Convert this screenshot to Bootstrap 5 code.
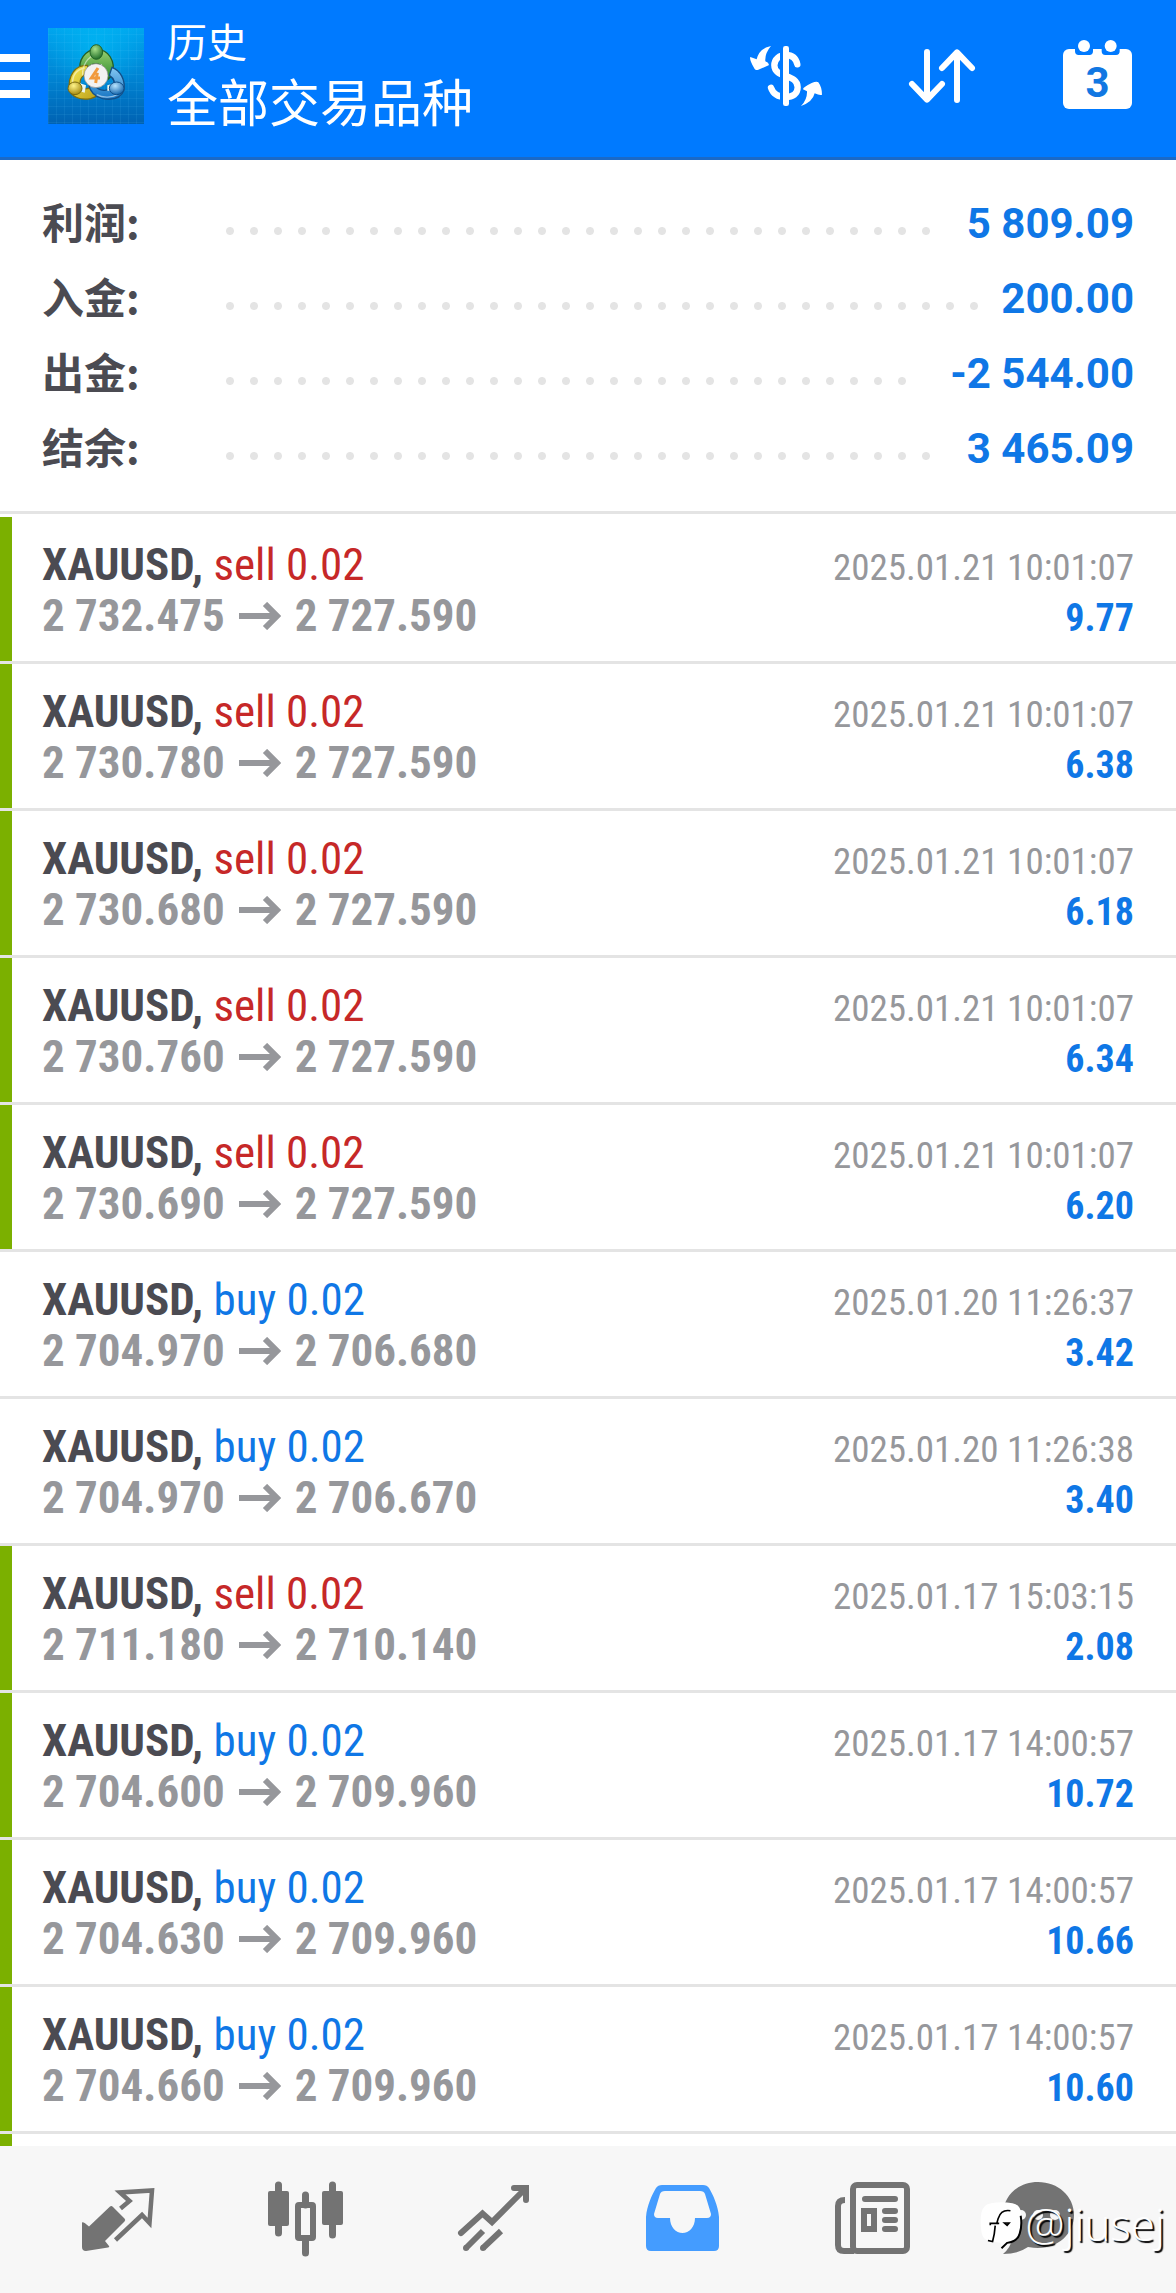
<!DOCTYPE html>
<html lang="zh-CN">
<head>
<meta charset="utf-8">
<meta name="viewport" content="width=device-width, initial-scale=1">
<title>历史 - 全部交易品种</title>
<link href="https://cdn.jsdelivr.net/npm/bootstrap@5.3.0/dist/css/bootstrap.min.css" rel="stylesheet">
<style>
:root{--edge:42px;--link:#0f77e6;--ink:#4b4b52;--soft:#96979b;--rule:#e4e4e4;--win:#7bb000}
body{font-family:Roboto,"Noto Sans CJK SC",sans-serif;color:var(--ink);background:#fff}
svg{display:block;flex:none}
.topbar{background:#007aff;border-bottom:3px solid #1a69c7;min-height:160px;padding-bottom:5px}
.burger{width:30px;height:44px}
.burger span{display:block;height:8px;background:#fff}
.app-logo{margin-left:18px}
.heading{margin:0 0 12px 23px;font-family:"Noto Sans CJK SC",sans-serif;line-height:60px}
.heading h1{font-size:40px;line-height:60px;font-weight:400}
.heading p{font-size:51px;line-height:60px}
.tool{width:156px;height:100px}
.totals{padding:26px var(--edge) 25px;border-bottom:3px solid var(--rule);margin-bottom:3px}
.total-line{height:75px;font-size:42px;font-weight:700;line-height:50px}
.total-line dt{width:176px;padding-bottom:6px;flex:none;font-family:"Noto Sans CJK SC",sans-serif;font-weight:700}
.leader{display:grid;grid-template-columns:repeat(auto-fill,24px);margin-right:14px}
.leader::before{content:"";grid-column:1/-1;height:24px;margin-top:15px;background:radial-gradient(circle,#e4e4e4 3.5px,transparent 4.5px) 0 0/24px 24px}
.total-line dd{color:var(--link)}
.deal{min-height:147px;padding:22px var(--edge) 0;border-bottom:3px solid var(--rule);position:relative;font-family:"Roboto Condensed","Liberation Sans Narrow",Roboto,sans-serif;line-height:51px;font-size:45px;flex:none}
.deal-win::before{content:"";position:absolute;left:0;top:0;bottom:0;width:12px;background:var(--win)}
.price{color:var(--soft);font-weight:700}
.price svg{width:42px;margin:0 14px 0 14px}
.stamp{font-size:37px;line-height:40px;color:var(--soft)}
.gain{font-size:38px;line-height:40px;font-weight:700;color:var(--link)}
.side-sell{color:#c62828}.side-buy{color:var(--link)}
.tabs{background:#f7f7f7;height:147px;padding:0 24px;color:#737373;position:relative}
.tabs a{color:inherit}
.tabs a.active{color:#449cff}
.stamp-mark{position:absolute;right:11px;bottom:37px;font-family:"Open Sans","Noto Sans",sans-serif;font-weight:300;font-size:44px;line-height:56px;color:#fff;text-shadow:2px 2px 1px #000;gap:3px;pointer-events:none}
.stamp-mark span{padding-bottom:4px}
</style>
<script src="https://cdn.jsdelivr.net/npm/bootstrap@5.3.0/dist/js/bootstrap.bundle.min.js"></script>
</head>
<body class="d-flex flex-column vh-100 overflow-hidden">

<header class="topbar d-flex align-items-center flex-shrink-0">
  <button class="burger btn border-0 rounded-0 p-0 d-flex flex-column justify-content-between" aria-label="菜单"><span class="w-100"></span><span class="w-100"></span><span class="w-100"></span></button>
  <svg class="app-logo" width="96" height="96" viewBox="144 54 288 288" role="img" aria-label="MetaTrader 4">
    <defs>
      <linearGradient id="sky" x1="0" y1="0" x2="0" y2="1"><stop offset="0" stop-color="#00a6ee"/><stop offset=".5" stop-color="#0085d4"/><stop offset="1" stop-color="#0062b2"/></linearGradient>
      <radialGradient id="glow" cx=".5" cy=".2" r=".5"><stop offset="0" stop-color="#00c0f8" stop-opacity=".6"/><stop offset="1" stop-color="#00c0f8" stop-opacity="0"/></radialGradient>
      <pattern id="mesh" width="24" height="24" patternUnits="userSpaceOnUse"><path d="M0 1H24M1 0V24" stroke="#6bd0ff" stroke-opacity=".16" stroke-width="2"/></pattern>
      <linearGradient id="gr" x1="0" y1="0" x2="0" y2="1"><stop offset="0" stop-color="#9bd070"/><stop offset="1" stop-color="#2a8a2d"/></linearGradient>
      <linearGradient id="ye" x1="0" y1="0" x2="1" y2="1"><stop offset="0" stop-color="#f7ea55"/><stop offset="1" stop-color="#b99c16"/></linearGradient>
      <linearGradient id="bl" x1="0" y1="0" x2="0" y2="1"><stop offset="0" stop-color="#85c8f2"/><stop offset="1" stop-color="#1473c2"/></linearGradient>
      <radialGradient id="gh" cx=".4" cy=".3" r=".7"><stop offset="0" stop-color="#a8e08a"/><stop offset="1" stop-color="#22702a"/></radialGradient>
      <radialGradient id="yh" cx=".4" cy=".3" r=".7"><stop offset="0" stop-color="#fff48a"/><stop offset="1" stop-color="#a58a10"/></radialGradient>
      <radialGradient id="bh" cx=".4" cy=".3" r=".7"><stop offset="0" stop-color="#b8e4ff"/><stop offset="1" stop-color="#1466ad"/></radialGradient>
    </defs>
    <path fill="url(#sky)" d="M144 54h288v288H144z"/><path fill="url(#glow)" d="M144 54h288v288H144z"/><path fill="url(#mesh)" d="M144 54h288v288H144z"/>
    <path d="M242 186C232 152 256 118 290 118C325 118 347 152 338 194L324 208C318 178 306 162 288 162C270 162 262 172 257 190Z" fill="url(#gr)" stroke="#245f25" stroke-width="4"/>
    <path d="M262 166C226 164 204 196 208 238C214 260 240 272 272 266C286 262 296 256 302 244L276 230C262 240 244 240 240 222C238 204 250 194 266 186Z" fill="url(#ye)" stroke="#7d6d0e" stroke-width="4"/>
    <path d="M336 172C362 182 376 210 372 240C362 268 332 270 308 266C284 260 270 244 266 224L284 226C298 244 322 246 338 232C348 216 340 204 328 196Z" fill="url(#bl)" stroke="#124f88" stroke-width="4"/>
    <path d="M274 162l16 10 16-10v16h-32zM240 220l18 6-4 22-14-4zM322 226l14-4 2 20-16 0z" fill="#eef6ee"/>
    <path d="M248 196C246 168 262 140 288 134M218 222C216 196 230 178 254 174M290 254C310 266 338 262 352 254" fill="none" stroke="#fff" stroke-opacity=".5" stroke-width="4"/>
    <ellipse cx="289" cy="126" rx="19" ry="22" fill="url(#gh)" stroke="#246327" stroke-width="3"/>
    <ellipse cx="225" cy="235" rx="21" ry="19" fill="url(#yh)" stroke="#7b6a10" stroke-width="3"/>
    <ellipse cx="350" cy="235" rx="22" ry="19" fill="url(#bh)" stroke="#104e88" stroke-width="3"/>
    <circle cx="288" cy="197" r="36" fill="#f3f2f2" stroke="#8a8a8a" stroke-width="2"/>
    <path d="M294 174L274 204H300M292 188L287 219" fill="none" stroke="#f19a3e" stroke-width="9"/>
  </svg>
  <div class="heading text-white">
    <h1 class="m-0">历史</h1>
    <p class="m-0">全部交易品种</p>
  </div>
  <div class="d-flex ms-auto">
    <button class="tool btn border-0 p-0 d-flex align-items-center justify-content-center" aria-label="交易品种">
      <svg width="84" height="72" viewBox="132 120 252 216"><g fill="none" stroke="#fff" stroke-width="19" stroke-linecap="round"><path d="M292 193C288 174 276 165 258 165C238 165 223 177 223 196C223 236 293 220 293 262C293 282 278 291 258 291C236 291 220 284 213 263"/></g><path d="M240 140h10v180h-10z" fill="#007aff"/><rect x="249" y="138" width="18" height="180" rx="7" fill="#fff"/><path fill="#fff" d="M213 138Q178 144 170 178L151 171Q147 178 164 207Q167 212 175 209L206 196Q209 189 196 184Q194 160 213 138ZM303 318Q322 298 321 274L309 268Q308 262 335 249Q350 243 355 247Q366 262 366 284Q360 287 344 280Q338 306 303 318Z"/></svg>
    </button>
    <button class="tool btn border-0 p-0 d-flex align-items-center justify-content-center" aria-label="排序">
      <svg width="84" height="72" viewBox="600 120 252 216"><path d="M681 156V298M636 252L681 299L726 252M771 300V158M726 204L771 157L816 204" fill="none" stroke="#fff" stroke-width="18" stroke-linecap="round" stroke-linejoin="round"/></svg>
    </button>
    <button class="tool btn border-0 p-0 d-flex align-items-center justify-content-center" aria-label="日期">
      <svg width="84" height="72" viewBox="1065 120 252 216"><rect x="1086" y="147" width="207" height="180" rx="18" fill="#fff"/><path d="M1122 140h54v14q0 11-11 11h-32q-11 0-11-11zM1202 140h54v14q0 11-11 11h-32q-11 0-11-11z" fill="#007aff"/><circle cx="1149" cy="138" r="18" fill="#fff"/><circle cx="1229" cy="138" r="18" fill="#fff"/><text x="1190" y="290" text-anchor="middle" font-family="Roboto" font-weight="700" font-size="126" fill="#1177e2">3</text></svg>
    </button>
  </div>
</header>

<main class="flex-grow-1 overflow-hidden d-flex flex-column">
  <dl class="totals flex-shrink-0" id="totals"></dl>
  <section id="deals" class="d-flex flex-column"></section>
</main>

<nav class="tabs d-flex align-items-center flex-shrink-0" aria-label="导航">
  <a href="#quotes" class="col d-flex justify-content-center" aria-label="行情"><svg width="88" height="80" viewBox="74 2180 88 80"><path fill="currentColor" d="M82 2222.500Q83 2221 89 2226.500L110 2206.500Q111.500 2205.500 113 2207L124.500 2218.500Q126 2220 124.500 2221.500L105 2241L109 2246Q110 2247 108 2247.500L86 2251Q82 2251 82 2247Z"/><path d="M120.500 2208.500L129.500 2201L120 2192.500L152 2190.500L149.500 2223L142 2215L115.500 2240" fill="none" stroke="currentColor" stroke-width="4.500"/></svg></a>
  <a href="#chart" class="col d-flex justify-content-center" aria-label="图表"><svg width="88" height="80" viewBox="262 2180 88 80"><path d="M278.500 2185V2233M305.500 2195V2205M305.500 2240V2253M332.500 2185V2235" stroke="currentColor" stroke-width="7" stroke-linecap="round"/><rect x="268" y="2191" width="21" height="35" rx="2" fill="currentColor"/><rect x="322" y="2191" width="21" height="34" rx="2" fill="currentColor"/><rect x="298" y="2205" width="15" height="33" rx="1" fill="none" stroke="currentColor" stroke-width="6"/></svg></a>
  <a href="#trade" class="col d-flex justify-content-center" aria-label="交易"><svg width="88" height="80" viewBox="450 2180 88 80"><path d="M461 2233L482.500 2213.500L492 2222L524 2190M514 2188H526V2200" fill="none" stroke="currentColor" stroke-width="6" stroke-linecap="round"/><path d="M466 2248L483 2231M483 2248L501 2231" stroke="currentColor" stroke-width="6"/><circle cx="466" cy="2248" r="3" fill="currentColor"/><circle cx="483" cy="2248" r="3" fill="currentColor"/></svg></a>
  <a href="#history" class="col d-flex justify-content-center active" aria-label="历史" aria-current="page"><svg width="88" height="80" viewBox="638 2180 88 80"><path fill="currentColor" fill-rule="evenodd" d="M646 2246V2217C647 2205 652 2195 656 2188Q658 2185 662 2185H703Q707 2185 709 2188C713 2195 718 2205 719 2217V2246Q719 2251 714 2251H651Q646 2251 646 2246ZM665 2191Q661 2191 660 2194L654 2214Q654 2218 658 2218H670C670 2227 676 2233 682.500 2233C689 2233 695 2227 695 2218H707Q711 2218 711 2214L705 2194Q704 2191 700 2191Z"/></svg></a>
  <a href="#news" class="col d-flex justify-content-center" aria-label="新闻"><svg width="88" height="80" viewBox="826 2180 88 80"><g fill="none" stroke="currentColor" stroke-width="6"><rect x="853" y="2185" width="54" height="66" rx="4"/><path d="M845 2200Q838 2200 838 2206V2245Q838 2251 844 2251H854"/><rect x="864" y="2211" width="10" height="18"/></g><path d="M865 2199H895M885 2211H895M885 2220H895M885 2229H895" stroke="currentColor" stroke-width="6" stroke-linecap="round"/></svg></a>
  <a href="#chat" class="col d-flex justify-content-center" aria-label="消息"><svg width="128" height="80" viewBox="994 2180 128 80"><path fill="currentColor" d="M1038 2182C1058 2182 1074 2196 1074 2215C1074 2234 1058 2248 1038 2248Q1034 2248 1028 2247Q1018 2254 1003 2254Q1012 2246 1011 2239C1006 2233 1003 2224 1003 2215C1003 2196 1018 2182 1038 2182Z"/><g fill="#f7f7f7"><circle cx="1021" cy="2215" r="5"/><circle cx="1038" cy="2215" r="5"/><circle cx="1055" cy="2215" r="5"/></g></svg></a>
  <div class="stamp-mark d-flex align-items-center">
    <svg width="43" height="50" viewBox="60 170 130 150"><path d="M94 176Q125 170 158 176Q182 180 184 206Q188 240 180 266Q174 292 142 294L126 312L122 296L96 292Q70 290 65 266Q59 236 64 206Q68 180 94 176Z" fill="#fff"/><path d="M183 214Q188 244 180 268Q173 293 142 296L125 312" fill="none" stroke="#000" stroke-width="6"/><path d="M152 199Q124 194 115 222L110 240M91 243V237H118M134 236h14l-6 7z" fill="none" stroke="#000" stroke-width="5"/><path d="M106 244Q104 272 98 292L84 289" fill="none" stroke="#000" stroke-width="5"/></svg>
    <span>@jiusej</span>
  </div>
</nav>

<script>
const totals = [["利润:", "5 809.09"], ["入金:", "200.00"], ["出金:", "-2 544.00"], ["结余:", "3 465.09"]];
document.getElementById("totals").innerHTML = totals.map(([k, v]) =>
  `<div class="total-line d-flex align-items-center"><dt>${k}</dt><span class="leader flex-grow-1"></span><dd class="m-0 text-nowrap">${v}</dd></div>`).join("");

// side, open price, close price, time, profit, highlighted bar
const deals = [
  ["sell", "2 732.475", "2 727.590", "2025.01.21 10:01:07", "9.77", 1],
  ["sell", "2 730.780", "2 727.590", "2025.01.21 10:01:07", "6.38", 1],
  ["sell", "2 730.680", "2 727.590", "2025.01.21 10:01:07", "6.18", 1],
  ["sell", "2 730.760", "2 727.590", "2025.01.21 10:01:07", "6.34", 1],
  ["sell", "2 730.690", "2 727.590", "2025.01.21 10:01:07", "6.20", 1],
  ["buy", "2 704.970", "2 706.680", "2025.01.20 11:26:37", "3.42", 0],
  ["buy", "2 704.970", "2 706.670", "2025.01.20 11:26:38", "3.40", 0],
  ["sell", "2 711.180", "2 710.140", "2025.01.17 15:03:15", "2.08", 1],
  ["buy", "2 704.600", "2 709.960", "2025.01.17 14:00:57", "10.72", 1],
  ["buy", "2 704.630", "2 709.960", "2025.01.17 14:00:57", "10.66", 1],
  ["buy", "2 704.660", "2 709.960", "2025.01.17 14:00:57", "10.60", 1]
];
const arrow = `<svg height="28" viewBox="0 0 42 28" role="img" aria-label="→"><path d="M0 14H38M26 2L38 14L26 26" fill="none" stroke="currentColor" stroke-width="6"/></svg>`;
document.getElementById("deals").innerHTML = deals.map(([side, from, to, time, gain, win]) =>
  `<article class="deal ${win ? "deal-win" : ""}">
    <div class="d-flex justify-content-between align-items-baseline"><div><strong>XAUUSD,</strong> <span class="side-${side}">${side} 0.02</span></div><time class="stamp">${time}</time></div>
    <div class="d-flex justify-content-between align-items-baseline"><div class="price d-flex align-items-center"><span>${from}</span>${arrow}<span>${to}</span></div><span class="gain">${gain}</span></div>
  </article>`).join("") + `<article class="deal deal-win"></article>`;
</script>
</body>
</html>
